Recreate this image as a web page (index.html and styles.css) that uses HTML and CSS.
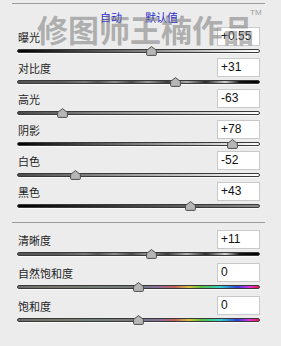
FILE: index.html
```html
<!DOCTYPE html>
<html lang="zh-CN">
<head>
    <meta charset="UTF-8">
    <meta name="viewport" content="width=device-width, initial-scale=1.0">
    <title>基本</title>
    <link rel="stylesheet" href="styles.css">
</head>
<body>

    <div class="panel">
        <div class="rule"></div>

        <!-- Auto / default -->
        <div class="header">
            <a class="link">自动</a>
            <a class="link">默认值</a>
        </div>

        <!-- Tone -->
        <div class="section">
            <div class="row">
                <div class="row-top"><span class="label">曝光</span><span class="value">+0.55</span></div>
                <div class="track track-exposure"><svg class="thumb" style="left: 55.5%" width="11" height="10" viewBox="0 0 11 10"><path d="M5.5 0.6 L10.4 4.4 V8.4 Q10.4 9.4 9.4 9.4 H1.6 Q0.6 9.4 0.6 8.4 V4.4 Z"/></svg></div>
            </div>
            <div class="row">
                <div class="row-top"><span class="label">对比度</span><span class="value">+31</span></div>
                <div class="track track-contrast"><svg class="thumb" style="left: 65.5%" width="11" height="10" viewBox="0 0 11 10"><path d="M5.5 0.6 L10.4 4.4 V8.4 Q10.4 9.4 9.4 9.4 H1.6 Q0.6 9.4 0.6 8.4 V4.4 Z"/></svg></div>
            </div>
            <div class="row">
                <div class="row-top"><span class="label">高光</span><span class="value">-63</span></div>
                <div class="track track-highlights"><svg class="thumb" style="left: 18.5%" width="11" height="10" viewBox="0 0 11 10"><path d="M5.5 0.6 L10.4 4.4 V8.4 Q10.4 9.4 9.4 9.4 H1.6 Q0.6 9.4 0.6 8.4 V4.4 Z"/></svg></div>
            </div>
            <div class="row">
                <div class="row-top"><span class="label">阴影</span><span class="value">+78</span></div>
                <div class="track track-shadows"><svg class="thumb" style="left: 89%" width="11" height="10" viewBox="0 0 11 10"><path d="M5.5 0.6 L10.4 4.4 V8.4 Q10.4 9.4 9.4 9.4 H1.6 Q0.6 9.4 0.6 8.4 V4.4 Z"/></svg></div>
            </div>
            <div class="row">
                <div class="row-top"><span class="label">白色</span><span class="value">-52</span></div>
                <div class="track track-whites"><svg class="thumb" style="left: 24%" width="11" height="10" viewBox="0 0 11 10"><path d="M5.5 0.6 L10.4 4.4 V8.4 Q10.4 9.4 9.4 9.4 H1.6 Q0.6 9.4 0.6 8.4 V4.4 Z"/></svg></div>
            </div>
            <div class="row">
                <div class="row-top"><span class="label">黑色</span><span class="value">+43</span></div>
                <div class="track track-blacks"><svg class="thumb" style="left: 71.5%" width="11" height="10" viewBox="0 0 11 10"><path d="M5.5 0.6 L10.4 4.4 V8.4 Q10.4 9.4 9.4 9.4 H1.6 Q0.6 9.4 0.6 8.4 V4.4 Z"/></svg></div>
            </div>
        </div>

        <div class="divider"></div>

        <!-- Presence -->
        <div class="section section-presence">
            <div class="row">
                <div class="row-top"><span class="label">清晰度</span><span class="value">+11</span></div>
                <div class="track track-contrast"><svg class="thumb" style="left: 55.5%" width="11" height="10" viewBox="0 0 11 10"><path d="M5.5 0.6 L10.4 4.4 V8.4 Q10.4 9.4 9.4 9.4 H1.6 Q0.6 9.4 0.6 8.4 V4.4 Z"/></svg></div>
            </div>
            <div class="row">
                <div class="row-top"><span class="label">自然饱和度</span><span class="value">0</span></div>
                <div class="track track-color"><svg class="thumb" style="left: 50%" width="11" height="10" viewBox="0 0 11 10"><path d="M5.5 0.6 L10.4 4.4 V8.4 Q10.4 9.4 9.4 9.4 H1.6 Q0.6 9.4 0.6 8.4 V4.4 Z"/></svg></div>
            </div>
            <div class="row">
                <div class="row-top"><span class="label">饱和度</span><span class="value">0</span></div>
                <div class="track track-color"><svg class="thumb" style="left: 50%" width="11" height="10" viewBox="0 0 11 10"><path d="M5.5 0.6 L10.4 4.4 V8.4 Q10.4 9.4 9.4 9.4 H1.6 Q0.6 9.4 0.6 8.4 V4.4 Z"/></svg></div>
            </div>
        </div>

        <!-- Watermark over the panel -->
        <div class="watermark">修图师王楠作品</div>
        <div class="tm">TM</div>
    </div>

</body>
</html>
```

FILE: styles.css
```css
body {
    margin: 0;
    background-color: #ececec;
    font-family: "Noto Sans CJK SC", "Liberation Sans", sans-serif;
    color: #1e1e1e;
}

.panel {
    position: relative;
    width: 281px;
    height: 346px;
    padding-top: 3px;
    box-sizing: border-box;
}

.rule {
    height: 1px;
    margin: 0 16px 0 12px;
    background-color: #9c9c9c;
}

.header {
    display: flex;
    align-items: center;
    gap: 23px;
    height: 21px;
    padding: 2px 0 0 100px;
}

.link {
    font-size: 11px;
    line-height: 14px;
    color: #2a2ad0;
    cursor: pointer;
}

.section {
    padding: 0 21px 0 17px;
}

.row {
    height: 31px;
}

.section-presence .row {
    height: 33px;
}

.row-top {
    display: flex;
    justify-content: space-between;
    align-items: center;
    height: 19px;
}

.label {
    padding-left: 1px;
    font-size: 11px;
    line-height: 14px;
}

.value {
    width: 43px;
    height: 19px;
    box-sizing: border-box;
    padding-left: 3px;
    border: 1px solid #c9c9c9;
    background-color: #fff;
    font-family: "Liberation Sans", Arial, sans-serif;
    font-size: 12px;
    line-height: 17px;
    color: #111;
}

.track {
    position: relative;
    height: 4px;
    margin-top: 3px;
    box-sizing: border-box;
    border: 1px solid #3a3a3a;
    border-radius: 3px;
    box-shadow: 0 1px 0 #fafafa;
}

.track-exposure,
.track-shadows {
    background: linear-gradient(to right, #000, #fff);
}

.track-highlights,
.track-whites {
    background: linear-gradient(to right, #4a4a4a, #fff);
}

.track-blacks {
    background: linear-gradient(to right, #000, #8a8a8a);
}

.track-contrast {
    background: linear-gradient(to right, #555 0%, #5c5c5c 18%, #7a7a7a 28%, #555 33%, #8c8c8c 40%, #4a4a4a 47%,
        #9a9a9a 54%, #3c3c3c 62%, #b0b0b0 70%, #2a2a2a 78%, #d0d0d0 86%, #111 92%, #000 100%);
}

.track-color {
    background: linear-gradient(to right, #6c6c6c 0%, #7a786e 15%, #747e78 30%, #7a7c7a 44%, #6e7a8a 52%,
        #8c6c9c 58%, #c4605a 65%, #d8c040 71%, #5cc040 76%, #30d0d0 84%, #3040e0 91%, #e030e0 96%, #f01c40 100%);
}

.thumb {
    position: absolute;
    top: -4px;
    margin-left: -5.5px;
}

.thumb path {
    fill: #b6b6b6;
    stroke: #4e4e4e;
    stroke-width: 1;
}

.divider {
    height: 1px;
    margin: 9px 16px 7px 12px;
    background-color: #9c9c9c;
}

.watermark {
    position: absolute;
    top: 12px;
    left: 37px;
    font-size: 31px;
    line-height: 34px;
    font-weight: 700;
    color: rgba(120, 120, 120, 0.55);
    white-space: nowrap;
    pointer-events: none;
}

.tm {
    position: absolute;
    top: 8px;
    left: 250px;
    font-family: "Liberation Sans", Arial, sans-serif;
    font-size: 8px;
    color: #a0a0a0;
}
```
